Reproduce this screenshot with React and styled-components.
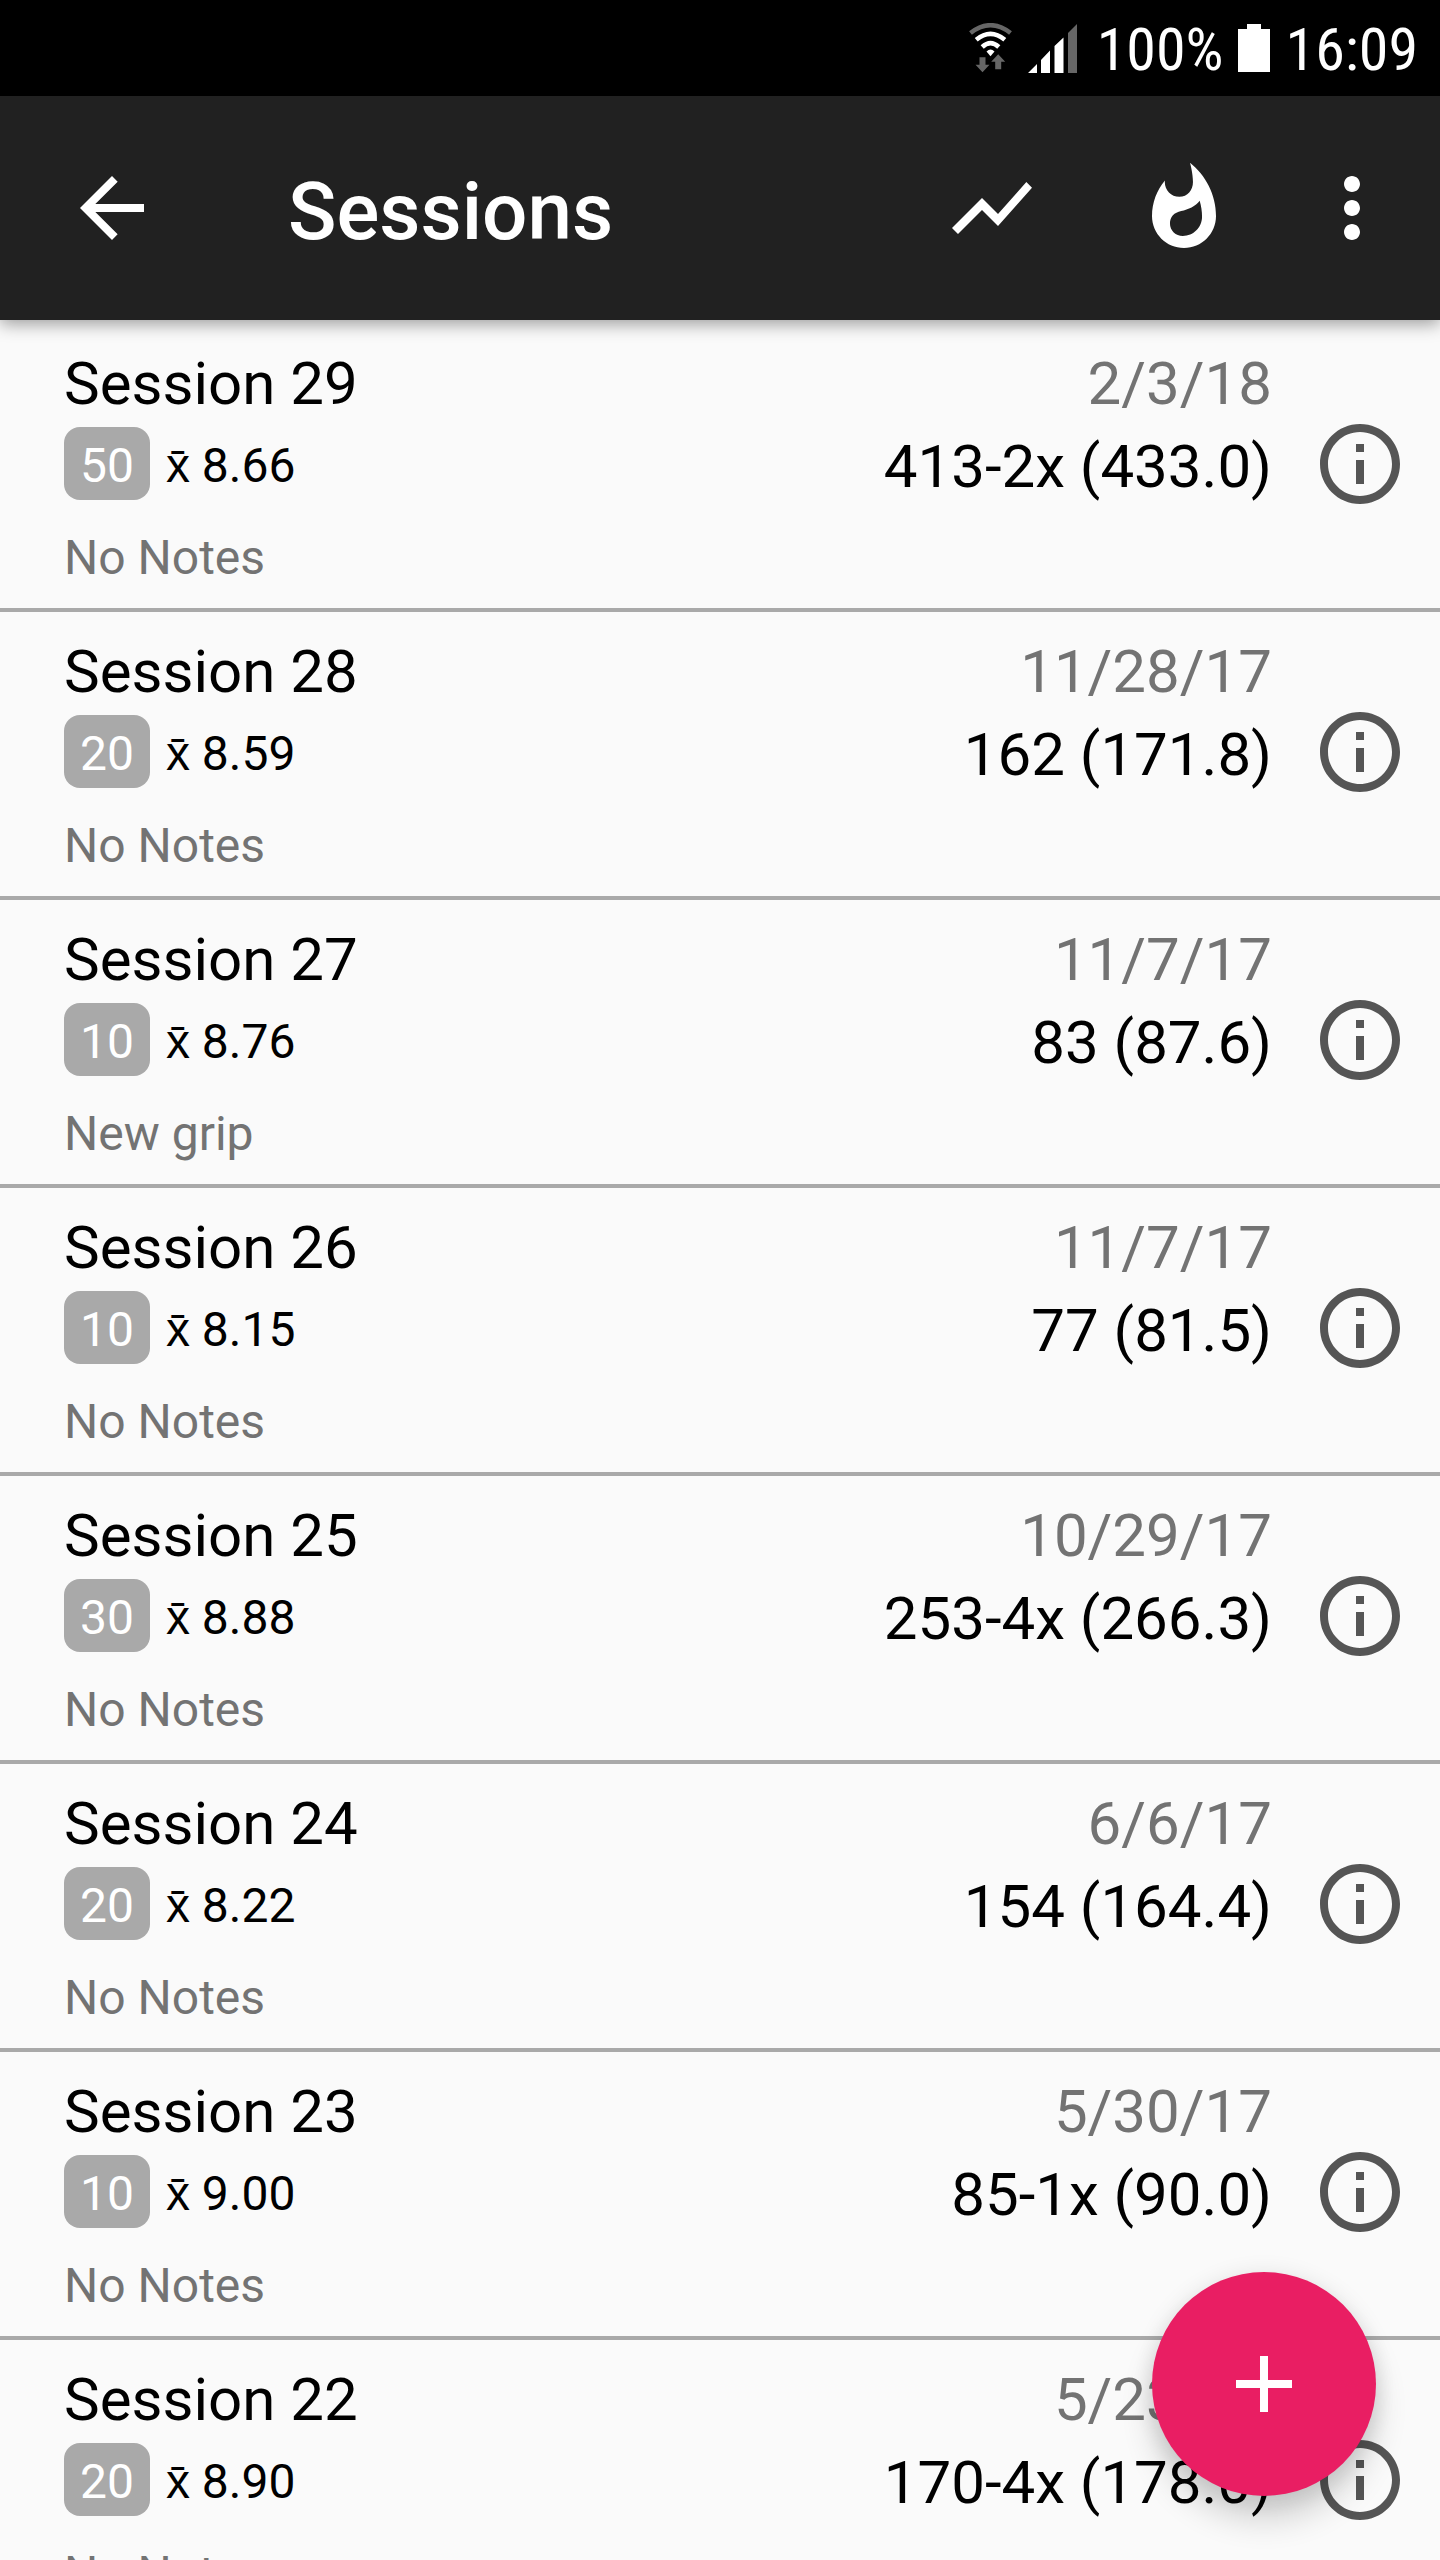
import React from 'react';
import styled, { createGlobalStyle } from 'styled-components';

const GlobalStyle = createGlobalStyle`
  *, *::before, *::after { box-sizing: border-box; }
  body {
    margin: 0;
    background: #fafafa;
    color: #000;
    font-family: Roboto, "Liberation Sans", sans-serif;
  }
  h1, h2, p, ul { margin: 0; padding: 0; font-weight: 400; }
  button { border: 0; padding: 0; background: none; color: inherit; font: inherit; cursor: pointer; }
`;

const Screen = styled.div`
  display: flex;
  flex-direction: column;
  height: 100vh;
`;

const StatusBar = styled.div`
  flex: none;
  display: flex;
  align-items: center;
  justify-content: flex-end;
  height: 96px;
  padding-right: 22px;
  background: #000;
  color: #fff;
`;

const StatusText = styled.span`
  font-family: "Roboto Condensed", Roboto, "Liberation Sans", sans-serif;
  font-size: 60px;
  line-height: 92px;
  padding-top: 4px;
`;

const Charge = styled(StatusText)`
  margin-right: 14px;
`;

const StatusIcon = styled.svg`
  display: block;
  flex: none;
  margin-right: ${({ $gap }) => $gap}px;
`;

const AppBar = styled.header`
  flex: none;
  position: relative;
  z-index: 1;
  display: flex;
  align-items: center;
  height: 224px;
  background: #212121;
  color: #fff;
  box-shadow: 0 4px 16px rgba(0, 0, 0, 0.38);
`;

const BarButton = styled.button`
  display: flex;
  align-items: center;
  height: 192px;
  padding: ${({ $pad }) => $pad};
`;

const Title = styled.h1`
  flex: 1;
  padding-top: 8px;
  font-size: 80px;
  line-height: 94px;
  font-weight: 500;
`;

const Icon = styled.svg`
  display: block;
  width: 96px;
  height: 96px;
  fill: currentColor;
`;

const List = styled.ul`
  flex: 1;
  min-height: 0;
  padding-top: 4px;
  overflow-y: auto;
  scrollbar-width: none;
  list-style: none;
`;

const Row = styled.li`
  display: flex;
  justify-content: space-between;
  padding: 25px 32px 22px 64px;
  border-bottom: 4px solid #a9a9a9;
`;

const Summary = styled.div`
  flex: 1;
`;

const Name = styled.h2`
  font-size: 60px;
  line-height: 70px;
`;

const Stats = styled.div`
  display: flex;
  align-items: center;
  gap: 16px;
  margin: 8px 0 30px;
  font-size: 48px;
  line-height: 68px;
`;

const Badge = styled.span`
  padding: 5px 16px 0;
  border-radius: 16px;
  background: #a9a9a9;
  color: #fff;
`;

const Average = styled.span`
  padding-top: 5px;
`;

const Notes = styled.p`
  color: #737373;
  font-size: 48px;
  line-height: 56px;
`;

const Result = styled.div`
  display: flex;
  flex-direction: column;
  gap: 13px;
  font-size: 60px;
  line-height: 70px;
  text-align: right;
`;

const DateText = styled.time`
  color: #737373;
`;

const InfoButton = styled.button`
  align-self: flex-start;
  margin: 67px 0 0 40px;
  color: #555;
`;

const AddButton = styled.button`
  position: fixed;
  right: 64px;
  bottom: 64px;
  z-index: 2;
  display: grid;
  place-items: center;
  width: 224px;
  height: 224px;
  border-radius: 50%;
  background: #e91e63;
  color: #fff;
  box-shadow: 0 24px 32px rgba(0, 0, 0, 0.16), 0 4px 24px rgba(0, 0, 0, 0.12);
`;

const sessions = [
  { id: 29, shots: 50, average: '8.66', date: '2/3/18', score: '413-2x (433.0)', notes: 'No Notes' },
  { id: 28, shots: 20, average: '8.59', date: '11/28/17', score: '162 (171.8)', notes: 'No Notes' },
  { id: 27, shots: 10, average: '8.76', date: '11/7/17', score: '83 (87.6)', notes: 'New grip' },
  { id: 26, shots: 10, average: '8.15', date: '11/7/17', score: '77 (81.5)', notes: 'No Notes' },
  { id: 25, shots: 30, average: '8.88', date: '10/29/17', score: '253-4x (266.3)', notes: 'No Notes' },
  { id: 24, shots: 20, average: '8.22', date: '6/6/17', score: '154 (164.4)', notes: 'No Notes' },
  { id: 23, shots: 10, average: '9.00', date: '5/30/17', score: '85-1x (90.0)', notes: 'No Notes' },
  { id: 22, shots: 20, average: '8.90', date: '5/23/17', score: '170-4x (178.0)', notes: 'No Notes' },
];

const paths = {
  back: 'M20 11H7.83l5.59-5.59L12 4l-8 8 8 8 1.41-1.41L7.83 13H20v-2z',
  chart: 'M3.5 18.49l6-6.01 4 4L22 6.92l-1.41-1.41-7.09 7.97-4-4L2 16.99z',
  fire: 'M13.5.67s.74 2.65.74 4.8c0 2.06-1.35 3.73-3.41 3.73-2.07 0-3.63-1.67-3.63-3.73l.03-.36C5.21 7.51 4 10.62 4 14c0 4.42 3.58 8 8 8s8-3.58 8-8C20 8.61 17.41 3.8 13.5.67zM11.71 19c-1.78 0-3.22-1.4-3.22-3.14 0-1.62 1.05-2.76 2.81-3.12 1.77-.36 3.6-1.21 4.62-2.58.39 1.29.59 2.65.59 4.04 0 2.65-2.15 4.8-4.8 4.8z',
  more: 'M12 8c1.1 0 2-.9 2-2s-.9-2-2-2-2 .9-2 2 .9 2 2 2zm0 2c-1.1 0-2 .9-2 2s.9 2 2 2 2-.9 2-2-.9-2-2-2zm0 6c-1.1 0-2 .9-2 2s.9 2 2 2 2-.9 2-2-.9-2-2-2z',
  info: 'M11 17h2v-6h-2v6zm1-15C6.48 2 2 6.48 2 12s4.48 10 10 10 10-4.48 10-10S17.52 2 12 2zm0 18c-4.41 0-8-3.59-8-8s3.59-8 8-8 8 3.59 8 8-3.59 8-8 8zM11 9h2V7h-2v2z',
  add: 'M19 13h-6v6h-2v-6H5v-2h6V5h2v6h6v2z',
};

function Glyph({ name }) {
  return (
    <Icon viewBox="0 0 24 24" aria-hidden="true">
      <path d={paths[name]} />
    </Icon>
  );
}

function WifiIcon() {
  return (
    <StatusIcon $gap={16} width="43" height="50" viewBox="0 0 43 50" aria-hidden="true">
      <g fill="none" strokeWidth="4.6">
        <path d="M1.5 10Q21.5 -5.500 41.500 10" stroke="#666" />
        <path d="M7.200 16.800Q21.500 5 35.800 16.800" stroke="#fff" />
        <path d="M13.200 24Q21.500 16.400 29.800 24" stroke="#fff" />
      </g>
      <path d="M17.500 28.500Q21.500 24.500 25.500 28.500L21.500 33.300Z" fill="#fff" />
      <path d="M10.500 34.300h6v7.500h4l-7 7.500-7-7.500h4zM26.200 46.300h6v-7.500h4L29.200 31.300l-7 7.500h4z" fill="#666" />
    </StatusIcon>
  );
}

function SignalIcon() {
  return (
    <StatusIcon $gap={20} width="49" height="49" viewBox="0 0 49 49" aria-hidden="true">
      <path d="M0 49L9 40V49ZM13 49V36L22 26.500V49ZM26.500 49V22L35.500 13.500V49Z" fill="#fff" />
      <path d="M40 49V9L49 0V49Z" fill="#666" />
    </StatusIcon>
  );
}

function BatteryIcon() {
  return (
    <StatusIcon $gap={16} width="32" height="48" viewBox="0 0 32 48" aria-hidden="true">
      <path d="M9 0h14v5h9v43H0V5h9z" fill="#fff" />
    </StatusIcon>
  );
}

export default function App() {
  return (
    <>
      <GlobalStyle />
      <Screen>
        <StatusBar>
          <WifiIcon />
          <SignalIcon />
          <Charge>100%</Charge>
          <BatteryIcon />
          <StatusText>16:09</StatusText>
        </StatusBar>
        <AppBar>
          <BarButton $pad="0 128px 0 64px" aria-label="Back">
            <Glyph name="back" />
          </BarButton>
          <Title>Sessions</Title>
          <BarButton $pad="0 48px" aria-label="Chart">
            <Glyph name="chart" />
          </BarButton>
          <BarButton $pad="0 48px" aria-label="Streak">
            <Glyph name="fire" />
          </BarButton>
          <BarButton $pad="0 40px 0 24px" aria-label="More options">
            <Glyph name="more" />
          </BarButton>
        </AppBar>
        <List>
          {sessions.map((s) => (
            <Row key={s.id}>
              <Summary>
                <Name>Session {s.id}</Name>
                <Stats>
                  <Badge>{s.shots}</Badge>
                  <Average>{'x\u0304 ' + s.average}</Average>
                </Stats>
                <Notes>{s.notes}</Notes>
              </Summary>
              <Result>
                <DateText>{s.date}</DateText>
                <span>{s.score}</span>
              </Result>
              <InfoButton aria-label={`Session ${s.id} details`}>
                <Glyph name="info" />
              </InfoButton>
            </Row>
          ))}
        </List>
        <AddButton aria-label="Add session">
          <Glyph name="add" />
        </AddButton>
      </Screen>
    </>
  );
}
